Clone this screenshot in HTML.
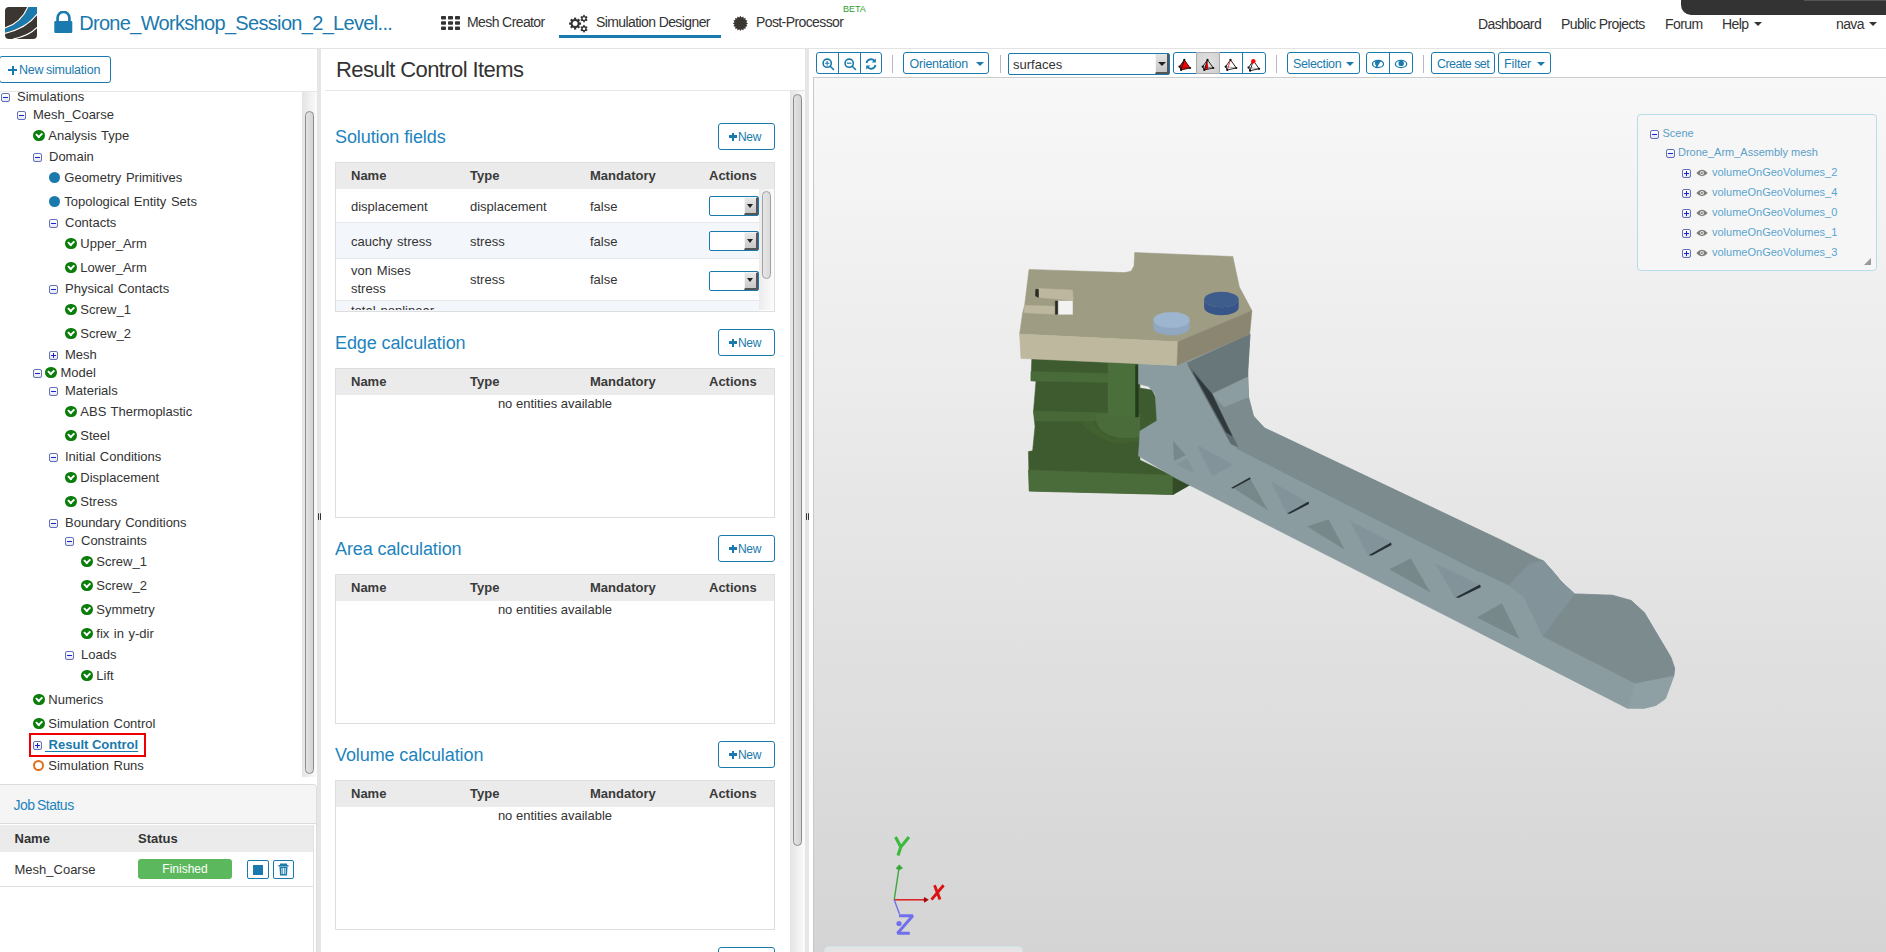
<!DOCTYPE html>
<html><head><meta charset="utf-8">
<style>
*{box-sizing:border-box;margin:0;padding:0}
html,body{width:1886px;height:952px;overflow:hidden;background:#fff;font-family:"Liberation Sans",sans-serif;color:#333}
.a{position:absolute}
.t{position:absolute;white-space:nowrap;line-height:1}
#nav{left:0;top:0;width:1886px;height:49px;border-bottom:1px solid #e3e3e3;background:#fff}
.nv{font-size:14px;color:#333;letter-spacing:-0.6px}
.split{background:#e6e6e6}
.sbtrack{background:linear-gradient(to right,#e4e4e4,#fbfbfb)}
.thumb{border:1px solid #8c8c8c;border-radius:5px;background:linear-gradient(to right,#e2e2e2,#d4d4d4)}
.tree{font-size:13px;color:#333;word-spacing:0.9px}
.chk{position:absolute;width:11.5px;height:11.5px;border-radius:50%;background:#0b7d0b}
.chk:after{content:"";position:absolute;left:3px;top:2.2px;width:4px;height:2.6px;border-left:2.1px solid #fff;border-bottom:2.1px solid #fff;transform:rotate(-45deg)}
.dot{position:absolute;width:11px;height:11px;border-radius:50%;background:#1a7aad}
.tg{position:absolute;width:9px;height:9px;border:1px solid #6470b8;border-radius:2px;background:linear-gradient(#fff,#e4e6f2)}
.tg:before{content:"";position:absolute;left:1px;top:3px;width:5px;height:1.3px;background:#1a22c8}
.tg.p:after{content:"";position:absolute;left:3px;top:1px;width:1.3px;height:5px;background:#1a22c8}
.btn{position:absolute;border:1px solid #1a7aad;border-radius:3px;background:#fff;color:#1a7aad}
.sect{font-size:18px;color:#1d84bd;letter-spacing:-0.1px}
.tbl{position:absolute;left:335px;width:440px;height:150px;border:1px solid #dedede;background:#fff}
.th{position:absolute;left:0;top:0;width:438px;height:25.5px;background:#ebebeb}
.thx{position:absolute;font-size:13px;font-weight:bold;color:#3a3a3a;white-space:nowrap;line-height:1}
.td{position:absolute;font-size:13px;color:#333;white-space:nowrap;line-height:1;word-spacing:1.3px}
</style></head><body>

<!-- NAVBAR -->
<div id="nav" class="a"></div>
<svg class="a" style="left:5px;top:7px" width="32" height="32" viewBox="0 0 32 32">
 <rect x="0" y="0" width="32" height="32" rx="4" fill="#3b3631"/>
 <path d="M23.5 0 L32 0 L32 6.5 Q22 20 0 25.5 L0 21.5 Q17 16 23.5 0 Z" fill="#1a7aad"/>
 <path d="M22.8 0 Q16.5 15.5 0 21" stroke="#fff" stroke-width="1.2" fill="none"/>
 <path d="M32 7.2 Q22 21 0 26.3" stroke="#fff" stroke-width="1.2" fill="none"/>
 <path d="M32 20.5 Q24 29 8 32" stroke="#fff" stroke-width="1.2" fill="none"/>
</svg>
<svg class="a" style="left:54px;top:11px" width="19" height="22" viewBox="0 0 19 22">
 <path d="M3.6 10 V6.8 A5.9 5.9 0 0 1 15.4 6.8 V10" stroke="#1a7aad" stroke-width="2.7" fill="none"/>
 <rect x="0.3" y="10" width="18" height="12" rx="1.3" fill="#1a7aad"/>
</svg>
<div class="t" style="left:79.2px;top:12.8px;font-size:20px;color:#1a7aad;letter-spacing:-0.68px">Drone_Workshop_Session_2_Level...</div>

<svg class="a" style="left:441px;top:16px" width="19" height="14" viewBox="0 0 19 14">
 <g fill="#333">
 <rect x="0" y="0" width="5" height="3.6" rx="0.8"/><rect x="7" y="0" width="5" height="3.6" rx="0.8"/><rect x="14" y="0" width="5" height="3.6" rx="0.8"/>
 <rect x="0" y="5.2" width="5" height="3.6" rx="0.8"/><rect x="7" y="5.2" width="5" height="3.6" rx="0.8"/><rect x="14" y="5.2" width="5" height="3.6" rx="0.8"/>
 <rect x="0" y="10.4" width="5" height="3.6" rx="0.8"/><rect x="7" y="10.4" width="5" height="3.6" rx="0.8"/><rect x="14" y="10.4" width="5" height="3.6" rx="0.8"/>
 </g>
</svg>
<div class="t nv" style="left:467px;top:15.3px">Mesh Creator</div>

<svg class="a" style="left:566px;top:14px" width="24" height="20" viewBox="0 0 24 20">
 <g fill="#333">
  <circle cx="9.1" cy="9.6" r="4.6"/>
  <g transform="translate(9.1 9.6)">
   <rect x="-1.1" y="-6" width="2.2" height="12"/>
   <rect x="-1.1" y="-6" width="2.2" height="12" transform="rotate(45)"/>
   <rect x="-1.1" y="-6" width="2.2" height="12" transform="rotate(90)"/>
   <rect x="-1.1" y="-6" width="2.2" height="12" transform="rotate(135)"/>
  </g>
  <circle cx="18" cy="4.6" r="2.7"/>
  <g transform="translate(18 4.6)">
   <rect x="-0.8" y="-3.7" width="1.6" height="7.4"/>
   <rect x="-0.8" y="-3.7" width="1.6" height="7.4" transform="rotate(60)"/>
   <rect x="-0.8" y="-3.7" width="1.6" height="7.4" transform="rotate(120)"/>
  </g>
  <circle cx="18" cy="14.7" r="2.7"/>
  <g transform="translate(18 14.7)">
   <rect x="-0.8" y="-3.7" width="1.6" height="7.4"/>
   <rect x="-0.8" y="-3.7" width="1.6" height="7.4" transform="rotate(60)"/>
   <rect x="-0.8" y="-3.7" width="1.6" height="7.4" transform="rotate(120)"/>
  </g>
 </g>
 <circle cx="9.1" cy="9.6" r="2.5" fill="#fff"/>
 <circle cx="18" cy="4.6" r="1.3" fill="#fff"/>
 <circle cx="18" cy="14.7" r="1.3" fill="#fff"/>
</svg>
<div class="t nv" style="left:596px;top:15.3px">Simulation Designer</div>
<div class="a" style="left:559px;top:35px;width:162px;height:3px;background:#1a7aad"></div>

<svg class="a" style="left:732px;top:15px" width="17" height="17" viewBox="-8.4 -8.4 17 17">
 <polygon fill="#3a3632" points="0.00,-7.60 1.17,-5.88 2.91,-7.02 3.33,-4.99 5.37,-5.37 4.99,-3.33 7.02,-2.91 5.88,-1.17 7.60,0.00 5.88,1.17 7.02,2.91 4.99,3.33 5.37,5.37 3.33,4.99 2.91,7.02 1.17,5.88 0.00,7.60 -1.17,5.88 -2.91,7.02 -3.33,4.99 -5.37,5.37 -4.99,3.33 -7.02,2.91 -5.88,1.17 -7.60,0.00 -5.88,-1.17 -7.02,-2.91 -4.99,-3.33 -5.37,-5.37 -3.33,-4.99 -2.91,-7.02 -1.17,-5.88"/>
</svg>
<div class="t nv" style="left:756px;top:15.3px">Post-Processor</div>
<div class="t" style="left:843px;top:5px;font-size:9px;color:#2ca02c">BETA</div>

<div class="a" style="left:1681px;top:0;width:205px;height:14.7px;background:#333;border-bottom-left-radius:10px"></div>
<div class="a" style="left:1804px;top:0;width:82px;height:1px;background:#555"></div>
<div class="t nv" style="left:1478px;top:16.5px">Dashboard</div>
<div class="t nv" style="left:1561px;top:16.5px">Public Projects</div>
<div class="t nv" style="left:1665px;top:16.5px">Forum</div>
<div class="t nv" style="left:1722px;top:16.5px">Help</div>
<div class="a" style="left:1754px;top:22px;width:0;height:0;border-left:4px solid transparent;border-right:4px solid transparent;border-top:4px solid #333"></div>
<div class="t nv" style="left:1836px;top:16.5px">nava</div>
<div class="a" style="left:1869px;top:22px;width:0;height:0;border-left:4px solid transparent;border-right:4px solid transparent;border-top:4px solid #333"></div>

<!-- LEFT PANEL -->
<div class="a" style="left:0;top:91px;width:317px;height:1px;background:#e6e6e6"></div>
<div class="a sbtrack" style="left:302px;top:92px;width:15px;height:685px"></div>
<div class="a thumb" style="left:305px;top:111px;width:9px;height:663px"></div>
<div class="tg" style="left:1px;top:93.2px"></div>
<div class="t tree" style="left:17px;top:89.8px">Simulations</div>
<div class="tg" style="left:17px;top:111.2px"></div>
<div class="t tree" style="left:33px;top:107.8px">Mesh_Coarse</div>
<div class="chk" style="left:33px;top:129.8px"></div>
<div class="t tree" style="left:48.3px;top:128.8px">Analysis Type</div>
<div class="tg" style="left:33px;top:153.2px"></div>
<div class="t tree" style="left:49px;top:149.8px">Domain</div>
<div class="dot" style="left:49px;top:172.0px"></div>
<div class="t tree" style="left:64.3px;top:170.8px">Geometry Primitives</div>
<div class="dot" style="left:49px;top:196.0px"></div>
<div class="t tree" style="left:64.3px;top:194.8px">Topological Entity Sets</div>
<div class="tg" style="left:49px;top:219.2px"></div>
<div class="t tree" style="left:65px;top:215.8px">Contacts</div>
<div class="chk" style="left:65px;top:237.8px"></div>
<div class="t tree" style="left:80.3px;top:236.8px">Upper_Arm</div>
<div class="chk" style="left:65px;top:261.8px"></div>
<div class="t tree" style="left:80.3px;top:260.8px">Lower_Arm</div>
<div class="tg" style="left:49px;top:285.2px"></div>
<div class="t tree" style="left:65px;top:281.8px">Physical Contacts</div>
<div class="chk" style="left:65px;top:303.8px"></div>
<div class="t tree" style="left:80.3px;top:302.8px">Screw_1</div>
<div class="chk" style="left:65px;top:327.8px"></div>
<div class="t tree" style="left:80.3px;top:326.8px">Screw_2</div>
<div class="tg p" style="left:49px;top:351.2px"></div>
<div class="t tree" style="left:65px;top:347.8px">Mesh</div>
<div class="tg" style="left:33px;top:369.2px"></div>
<div class="chk" style="left:45px;top:366.8px"></div>
<div class="t tree" style="left:60.5px;top:365.8px">Model</div>
<div class="tg" style="left:49px;top:387.2px"></div>
<div class="t tree" style="left:65px;top:383.8px">Materials</div>
<div class="chk" style="left:65px;top:405.8px"></div>
<div class="t tree" style="left:80.3px;top:404.8px">ABS Thermoplastic</div>
<div class="chk" style="left:65px;top:429.8px"></div>
<div class="t tree" style="left:80.3px;top:428.8px">Steel</div>
<div class="tg" style="left:49px;top:453.2px"></div>
<div class="t tree" style="left:65px;top:449.8px">Initial Conditions</div>
<div class="chk" style="left:65px;top:471.8px"></div>
<div class="t tree" style="left:80.3px;top:470.8px">Displacement</div>
<div class="chk" style="left:65px;top:495.8px"></div>
<div class="t tree" style="left:80.3px;top:494.8px">Stress</div>
<div class="tg" style="left:49px;top:519.2px"></div>
<div class="t tree" style="left:65px;top:515.8px">Boundary Conditions</div>
<div class="tg" style="left:65px;top:537.2px"></div>
<div class="t tree" style="left:81px;top:533.8px">Constraints</div>
<div class="chk" style="left:81px;top:555.8px"></div>
<div class="t tree" style="left:96.3px;top:554.8px">Screw_1</div>
<div class="chk" style="left:81px;top:579.8px"></div>
<div class="t tree" style="left:96.3px;top:578.8px">Screw_2</div>
<div class="chk" style="left:81px;top:603.8px"></div>
<div class="t tree" style="left:96.3px;top:602.8px">Symmetry</div>
<div class="chk" style="left:81px;top:627.8px"></div>
<div class="t tree" style="left:96.3px;top:626.8px">fix in y-dir</div>
<div class="tg" style="left:65px;top:651.2px"></div>
<div class="t tree" style="left:81px;top:647.8px">Loads</div>
<div class="chk" style="left:81px;top:669.8px"></div>
<div class="t tree" style="left:96.3px;top:668.8px">Lift</div>
<div class="chk" style="left:33px;top:693.8px"></div>
<div class="t tree" style="left:48.3px;top:692.8px">Numerics</div>
<div class="chk" style="left:33px;top:717.8px"></div>
<div class="t tree" style="left:48.3px;top:716.8px">Simulation Control</div>
<div class="tg p" style="left:33px;top:741.2px"></div>
<div class="t" style="left:45px;top:737.8px;font-size:13px;font-weight:bold;color:#1a7aad;text-decoration:underline;text-underline-offset:2px">&nbsp;Result Control</div>
<div class="a" style="left:29px;top:733px;width:117px;height:24px;border:2px solid #ee0000"></div>
<div class="a" style="left:33px;top:760.0px;width:11px;height:11px;border-radius:50%;border:2px solid #e0701e"></div>
<div class="t tree" style="left:48.3px;top:758.8px">Simulation Runs</div>

<div class="a" style="left:-1px;top:56px;width:112px;height:27px;border:1px solid #1a7aad;border-radius:3px;background:#fff"></div>
<div class="a" style="left:8.3px;top:69px;width:9px;height:2.4px;background:#1a7aad"></div>
<div class="a" style="left:11.6px;top:65.7px;width:2.4px;height:9px;background:#1a7aad"></div>
<div class="t" style="left:19px;top:63.5px;font-size:12.5px;color:#1a7aad;letter-spacing:-0.2px;word-spacing:-0.8px">New simulation</div>

<div class="a" style="left:0;top:784px;width:317px;height:168px;border-top:1px solid #dddddd;border-right:1px solid #dddddd;border-top-right-radius:4px;background:#fff"></div>
<div class="a" style="left:0;top:785px;width:316px;height:39px;background:#f5f5f5;border-top-right-radius:3px;border-bottom:1px solid #dddddd"></div>
<div class="t" style="left:13.5px;top:798px;font-size:14px;color:#1d84bd;letter-spacing:-0.5px;word-spacing:-1px">Job Status</div>
<div class="a" style="left:0;top:825px;width:314px;height:27px;background:#ebebeb"></div>
<div class="a" style="left:313px;top:825px;width:1px;height:127px;background:#e2e2e2"></div>
<div class="t" style="left:14.5px;top:832px;font-size:13px;font-weight:bold;color:#333">Name</div>
<div class="t" style="left:138px;top:832px;font-size:13px;font-weight:bold;color:#333">Status</div>
<div class="t" style="left:14.5px;top:863px;font-size:13px;color:#333">Mesh_Coarse</div>
<div class="a" style="left:0;top:886px;width:313px;height:1px;background:#e2e2e2"></div>
<div class="a" style="left:138px;top:859px;width:94px;height:20px;border-radius:3px;background:#5cb85c"></div>
<div class="t" style="left:138px;top:863px;width:94px;text-align:center;font-size:12px;color:#fff">Finished</div>
<div class="a" style="left:247px;top:860px;width:22px;height:19px;border:1px solid #1a7aad;border-radius:2px;background:#fff"></div>
<div class="a" style="left:253px;top:865px;width:10px;height:10px;background:#1a7aad"></div>
<div class="a" style="left:273px;top:860px;width:21px;height:19px;border:1px solid #1a7aad;border-radius:2px;background:#fff"></div>
<svg class="a" style="left:278px;top:863px" width="11" height="13" viewBox="0 0 11 13">
 <rect x="2" y="0.5" width="7" height="2" fill="#1a7aad"/>
 <rect x="0.5" y="2" width="10" height="1.6" fill="#1a7aad"/>
 <path d="M1.5 4 H9.5 L9 12.5 H2 Z" fill="#1a7aad"/>
 <rect x="3.5" y="5" width="0.9" height="6" fill="#fff"/><rect x="5.1" y="5" width="0.9" height="6" fill="#fff"/><rect x="6.7" y="5" width="0.9" height="6" fill="#fff"/>
</svg>


<!-- SPLITTERS -->
<div class="a split" style="left:317px;top:49px;width:4px;height:903px"></div>
<div class="a split" style="left:805px;top:49px;width:4px;height:903px"></div>
<div class="a" style="left:318px;top:513px;width:1px;height:7px;background:#333;border-radius:1px"></div>
<div class="a" style="left:320px;top:513px;width:1px;height:7px;background:#333;border-radius:1px"></div>
<div class="a" style="left:806px;top:513px;width:1px;height:7px;background:#333;border-radius:1px"></div>
<div class="a" style="left:808px;top:513px;width:1px;height:7px;background:#333;border-radius:1px"></div>

<!-- MIDDLE -->
<div class="t" style="left:336px;top:59.3px;font-size:22px;color:#333;letter-spacing:-0.6px">Result Control Items</div>
<div class="a" style="left:325px;top:90px;width:480px;height:1px;background:#e6e6e6"></div>
<div class="a sbtrack" style="left:790px;top:91px;width:15px;height:861px"></div>
<div class="a thumb" style="left:793px;top:94px;width:9px;height:752px"></div>
<div class="t sect" style="left:335px;top:128px">Solution fields</div>
<div class="btn" style="left:718px;top:123px;width:57px;height:27px"></div>
<div class="a" style="left:729px;top:135.3px;width:8px;height:2.4px;background:#1a7aad"></div>
<div class="a" style="left:731.8px;top:132.5px;width:2.4px;height:8px;background:#1a7aad"></div>
<div class="t" style="left:738px;top:131px;font-size:12px;color:#1a7aad;letter-spacing:-0.3px">New</div>
<div class="tbl" style="top:162px"></div>
<div class="th" style="left:336px;top:163px"></div>
<div class="thx" style="left:351px;top:168.7px">Name</div>
<div class="thx" style="left:470px;top:168.7px">Type</div>
<div class="thx" style="left:590px;top:168.7px">Mandatory</div>
<div class="thx" style="left:709px;top:168.7px">Actions</div>
<div class="t sect" style="left:335px;top:334px">Edge calculation</div>
<div class="btn" style="left:718px;top:329px;width:57px;height:27px"></div>
<div class="a" style="left:729px;top:341.3px;width:8px;height:2.4px;background:#1a7aad"></div>
<div class="a" style="left:731.8px;top:338.5px;width:2.4px;height:8px;background:#1a7aad"></div>
<div class="t" style="left:738px;top:337px;font-size:12px;color:#1a7aad;letter-spacing:-0.3px">New</div>
<div class="tbl" style="top:368px"></div>
<div class="th" style="left:336px;top:369px"></div>
<div class="thx" style="left:351px;top:374.7px">Name</div>
<div class="thx" style="left:470px;top:374.7px">Type</div>
<div class="thx" style="left:590px;top:374.7px">Mandatory</div>
<div class="thx" style="left:709px;top:374.7px">Actions</div>
<div class="t" style="left:336px;width:438px;text-align:center;top:397px;font-size:13px;color:#333;">no entities available</div>
<div class="t sect" style="left:335px;top:540px">Area calculation</div>
<div class="btn" style="left:718px;top:535px;width:57px;height:27px"></div>
<div class="a" style="left:729px;top:547.3px;width:8px;height:2.4px;background:#1a7aad"></div>
<div class="a" style="left:731.8px;top:544.5px;width:2.4px;height:8px;background:#1a7aad"></div>
<div class="t" style="left:738px;top:543px;font-size:12px;color:#1a7aad;letter-spacing:-0.3px">New</div>
<div class="tbl" style="top:574px"></div>
<div class="th" style="left:336px;top:575px"></div>
<div class="thx" style="left:351px;top:580.7px">Name</div>
<div class="thx" style="left:470px;top:580.7px">Type</div>
<div class="thx" style="left:590px;top:580.7px">Mandatory</div>
<div class="thx" style="left:709px;top:580.7px">Actions</div>
<div class="t" style="left:336px;width:438px;text-align:center;top:603px;font-size:13px;color:#333;">no entities available</div>
<div class="t sect" style="left:335px;top:746px">Volume calculation</div>
<div class="btn" style="left:718px;top:741px;width:57px;height:27px"></div>
<div class="a" style="left:729px;top:753.3px;width:8px;height:2.4px;background:#1a7aad"></div>
<div class="a" style="left:731.8px;top:750.5px;width:2.4px;height:8px;background:#1a7aad"></div>
<div class="t" style="left:738px;top:749px;font-size:12px;color:#1a7aad;letter-spacing:-0.3px">New</div>
<div class="tbl" style="top:780px"></div>
<div class="th" style="left:336px;top:781px"></div>
<div class="thx" style="left:351px;top:786.7px">Name</div>
<div class="thx" style="left:470px;top:786.7px">Type</div>
<div class="thx" style="left:590px;top:786.7px">Mandatory</div>
<div class="thx" style="left:709px;top:786.7px">Actions</div>
<div class="t" style="left:336px;width:438px;text-align:center;top:809px;font-size:13px;color:#333;">no entities available</div>
<div class="btn" style="left:718px;top:947px;width:57px;height:27px"></div>
<div class="a" style="left:729px;top:959.3px;width:8px;height:2.4px;background:#1a7aad"></div>
<div class="a" style="left:731.8px;top:956.5px;width:2.4px;height:8px;background:#1a7aad"></div>
<div class="t" style="left:738px;top:955px;font-size:12px;color:#1a7aad;letter-spacing:-0.3px">New</div>
<div class="a" style="left:336px;top:223px;width:423px;height:35px;background:#f3f6fa"></div>
<div class="a" style="left:336px;top:300px;width:423px;height:11px;background:#f3f6fa"></div>
<div class="a" style="left:336px;top:222px;width:423px;height:1px;background:#e6e8ec"></div>
<div class="a" style="left:336px;top:258px;width:423px;height:1px;background:#e6e8ec"></div>
<div class="a" style="left:336px;top:300px;width:423px;height:1px;background:#e6e8ec"></div>
<div class="a" style="left:759px;top:189px;width:15px;height:121px;background:linear-gradient(to right,#ececec,#fcfcfc)"></div>
<div class="a" style="left:762px;top:191px;width:9px;height:88px;border:1px solid #a0a0a0;border-radius:5px;background:linear-gradient(to right,#e6e6e6,#dadada)"></div>
<div class="td" style="left:351px;top:199.5px">displacement</div>
<div class="td" style="left:470px;top:199.5px">displacement</div>
<div class="td" style="left:590px;top:199.5px">false</div>
<div class="td" style="left:351px;top:235px">cauchy stress</div>
<div class="td" style="left:470px;top:235px">stress</div>
<div class="td" style="left:590px;top:235px">false</div>
<div class="td" style="left:351px;top:264px">von Mises</div>
<div class="td" style="left:351px;top:282px">stress</div>
<div class="td" style="left:470px;top:273px">stress</div>
<div class="td" style="left:590px;top:273px">false</div>
<div class="a" style="left:336px;top:301px;width:423px;height:9px;overflow:hidden"><div class="td" style="left:15px;top:3px">total nonlinear</div></div>
<div class="a" style="left:709px;top:196px;width:50px;height:20px;border:1px solid #1a7aad;border-radius:2px;background:#fff"></div>
<div class="a" style="left:743.5px;top:197px;width:14.5px;height:18px;background:linear-gradient(#e8e8e8,#c8c8c8);border-right:2px solid #555;border-bottom:2px solid #555;border-left:1px solid #f4f4f4;border-top:1px solid #f4f4f4"></div>
<div class="a" style="left:747px;top:203.5px;width:0;height:0;border-left:3.5px solid transparent;border-right:3.5px solid transparent;border-top:4px solid #222"></div>
<div class="a" style="left:709px;top:231px;width:50px;height:20px;border:1px solid #1a7aad;border-radius:2px;background:#fff"></div>
<div class="a" style="left:743.5px;top:232px;width:14.5px;height:18px;background:linear-gradient(#e8e8e8,#c8c8c8);border-right:2px solid #555;border-bottom:2px solid #555;border-left:1px solid #f4f4f4;border-top:1px solid #f4f4f4"></div>
<div class="a" style="left:747px;top:238.5px;width:0;height:0;border-left:3.5px solid transparent;border-right:3.5px solid transparent;border-top:4px solid #222"></div>
<div class="a" style="left:709px;top:270.5px;width:50px;height:20px;border:1px solid #1a7aad;border-radius:2px;background:#fff"></div>
<div class="a" style="left:743.5px;top:271.5px;width:14.5px;height:18px;background:linear-gradient(#e8e8e8,#c8c8c8);border-right:2px solid #555;border-bottom:2px solid #555;border-left:1px solid #f4f4f4;border-top:1px solid #f4f4f4"></div>
<div class="a" style="left:747px;top:278.0px;width:0;height:0;border-left:3.5px solid transparent;border-right:3.5px solid transparent;border-top:4px solid #222"></div>


<!-- RIGHT -->
<div class="a" style="left:813px;top:77px;width:1073px;height:875px;border-top:1px solid #cccccc;border-left:1px solid #c8c8c8;background:linear-gradient(#f8f8f8,#d4d4d4)"></div>
<div class="btn" style="left:816px;top:52px;width:66px;height:22px"></div>
<div class="a" style="left:838px;top:53px;width:1px;height:20px;background:#1a7aad"></div>
<div class="a" style="left:860px;top:53px;width:1px;height:20px;background:#1a7aad"></div>
<svg class="a" style="left:822px;top:58px" width="13" height="13" viewBox="0 0 13 13">
 <circle cx="5.2" cy="5.2" r="4.1" stroke="#1a7aad" stroke-width="1.6" fill="none"/>
 <path d="M8.2 8.2 L11.5 11.5" stroke="#1a7aad" stroke-width="1.6" stroke-linecap="round"/>
 <path d="M3 5.2 H7.4 M5.2 3 V7.4" stroke="#1a7aad" stroke-width="1.1"/>
</svg>
<svg class="a" style="left:844px;top:58px" width="13" height="13" viewBox="0 0 13 13">
 <circle cx="5.2" cy="5.2" r="4.1" stroke="#1a7aad" stroke-width="1.6" fill="none"/>
 <path d="M8.2 8.2 L11.5 11.5" stroke="#1a7aad" stroke-width="1.6" stroke-linecap="round"/>
 <path d="M3 5.2 H7.4" stroke="#1a7aad" stroke-width="1.2"/>
</svg>
<svg class="a" style="left:865px;top:58.3px" width="12" height="12" viewBox="0 0 12 12">
 <path d="M1.5 5 A4.6 4.6 0 0 1 9.6 3" stroke="#1a7aad" stroke-width="1.8" fill="none"/>
 <path d="M10.8 0.5 V4.6 H6.7 Z" fill="#1a7aad"/>
 <path d="M10.5 7 A4.6 4.6 0 0 1 2.4 9" stroke="#1a7aad" stroke-width="1.8" fill="none"/>
 <path d="M1.2 11.5 V7.4 H5.3 Z" fill="#1a7aad"/>
</svg>
<div class="a" style="left:892px;top:55px;width:1px;height:18px;background:#b8b8c8"></div>

<div class="btn" style="left:903px;top:52px;width:86px;height:22px"></div>
<div class="t" style="left:909.5px;top:58px;font-size:12.5px;color:#1a7aad;letter-spacing:-0.25px">Orientation</div>
<div class="a" style="left:976px;top:62px;width:0;height:0;border-left:4px solid transparent;border-right:4px solid transparent;border-top:4px solid #1a7aad"></div>
<div class="a" style="left:1000px;top:55px;width:1px;height:18px;background:#b8b8c8"></div>

<div class="a" style="left:1008px;top:53px;width:162px;height:22px;border:1px solid #1a7aad;border-radius:2px;background:#fff"></div>
<div class="t" style="left:1013px;top:58px;font-size:13px;color:#333">surfaces</div>
<div class="a" style="left:1155px;top:54px;width:14px;height:20px;background:linear-gradient(#e4e4e4,#c6c6c6);border-right:2px solid #555;border-bottom:2px solid #555;border-left:1px solid #f2f2f2"></div>
<div class="a" style="left:1157.5px;top:61.5px;width:0;height:0;border-left:4px solid transparent;border-right:4px solid transparent;border-top:4px solid #222"></div>

<div class="btn" style="left:1173px;top:52px;width:93px;height:22px"></div>
<div class="a" style="left:1196px;top:52px;width:24px;height:22px;border:1px solid #aaaaaa;background:radial-gradient(ellipse at 50% 40%,#e2e2e2,#cfcfcf)"></div>
<div class="a" style="left:1242px;top:53px;width:1px;height:20px;background:#1a7aad"></div>
<svg class="a" style="left:0;top:0" width="1886" height="80" viewBox="0 0 1886 80">
<polygon points="1184.3,59.8 1179.5,66.7 1181.1,69.9 1190.1,68.0" fill="#ff0000"/>
<path d="M1184.3,59.8 L1179.5,66.7" stroke="#111" stroke-width="0.9"/>
<path d="M1184.3,59.8 L1181.1,69.9" stroke="#111" stroke-width="0.9"/>
<path d="M1184.3,59.8 L1190.1,68.0" stroke="#111" stroke-width="0.9"/>
<path d="M1179.5,66.7 L1181.1,69.9" stroke="#111" stroke-width="0.9"/>
<path d="M1181.1,69.9 L1190.1,68.0" stroke="#111" stroke-width="0.9"/>
<path d="M1179.5,66.7 L1190.1,68.0" stroke="#111" stroke-width="0.6" opacity="0.6"/>
<circle cx="1179.5" cy="66.7" r="1.1" fill="#111"/>
<circle cx="1181.1" cy="69.9" r="1.1" fill="#111"/>
<circle cx="1190.1" cy="68.0" r="1.1" fill="#111"/>
<circle cx="1184.3" cy="59.8" r="1.1" fill="#111"/>
<polygon points="1207.5,59.8 1204.3,69.9 1208.3,69.0" fill="#ff0000"/>
<path d="M1207.5,59.8 L1202.7,66.7" stroke="#111" stroke-width="0.9"/>
<path d="M1207.5,59.8 L1204.3,69.9" stroke="#111" stroke-width="0.9"/>
<path d="M1207.5,59.8 L1213.3,68.0" stroke="#111" stroke-width="0.9"/>
<path d="M1202.7,66.7 L1204.3,69.9" stroke="#111" stroke-width="0.9"/>
<path d="M1204.3,69.9 L1213.3,68.0" stroke="#111" stroke-width="0.9"/>
<path d="M1202.7,66.7 L1213.3,68.0" stroke="#111" stroke-width="0.6" opacity="0.6"/>
<circle cx="1202.7" cy="66.7" r="1.1" fill="#111"/>
<circle cx="1204.3" cy="69.9" r="1.1" fill="#111"/>
<circle cx="1213.3" cy="68.0" r="1.1" fill="#111"/>
<circle cx="1207.5" cy="59.8" r="1.1" fill="#111"/>
<path d="M1230.5,59.8 L1225.7,66.7" stroke="#111" stroke-width="0.9"/>
<path d="M1230.5,59.8 L1227.3,69.9" stroke="#ff2020" stroke-width="0.9"/>
<path d="M1230.5,59.8 L1236.3,68.0" stroke="#111" stroke-width="0.9"/>
<path d="M1225.7,66.7 L1227.3,69.9" stroke="#111" stroke-width="0.9"/>
<path d="M1227.3,69.9 L1236.3,68.0" stroke="#111" stroke-width="0.9"/>
<path d="M1225.7,66.7 L1236.3,68.0" stroke="#111" stroke-width="0.6" opacity="0.6"/>
<circle cx="1225.7" cy="66.7" r="1.1" fill="#111"/>
<circle cx="1227.3" cy="69.9" r="1.1" fill="#111"/>
<circle cx="1236.3" cy="68.0" r="1.1" fill="#111"/>
<circle cx="1230.5" cy="59.8" r="1.1" fill="#111"/>
<path d="M1253.3,60.6 L1248.5,67.5" stroke="#111" stroke-width="0.9"/>
<path d="M1253.3,60.6 L1250.1,70.7" stroke="#111" stroke-width="0.9"/>
<path d="M1253.3,60.6 L1259.1,68.8" stroke="#111" stroke-width="0.9"/>
<path d="M1248.5,67.5 L1250.1,70.7" stroke="#111" stroke-width="0.9"/>
<path d="M1250.1,70.7 L1259.1,68.8" stroke="#111" stroke-width="0.9"/>
<path d="M1248.5,67.5 L1259.1,68.8" stroke="#111" stroke-width="0.6" opacity="0.6"/>
<circle cx="1248.5" cy="67.5" r="1.1" fill="#111"/>
<circle cx="1250.1" cy="70.7" r="1.1" fill="#111"/>
<circle cx="1259.1" cy="68.8" r="1.1" fill="#111"/>
<circle cx="1253.3" cy="61.2" r="2.2" fill="#ff0000"/>
</svg>
<div class="a" style="left:1276px;top:55px;width:1px;height:18px;background:#b8b8c8"></div>

<div class="btn" style="left:1287px;top:52px;width:73px;height:22px"></div>
<div class="t" style="left:1293px;top:58px;font-size:12.5px;color:#1a7aad;letter-spacing:-0.35px">Selection</div>
<div class="a" style="left:1346px;top:62px;width:0;height:0;border-left:4px solid transparent;border-right:4px solid transparent;border-top:4px solid #1a7aad"></div>

<div class="btn" style="left:1366px;top:52px;width:47px;height:22px"></div>
<div class="a" style="left:1389px;top:53px;width:1px;height:20px;background:#1a7aad"></div>
<svg class="a" style="left:1360px;top:50px" width="60" height="26" viewBox="1360 50 60 26">
 <ellipse cx="1378" cy="64" rx="5.5" ry="3.5" stroke="#1a7aad" stroke-width="1.3" fill="none"/>
 <path d="M1375 61.6 Q1377 60.6 1379.3 60.8 L1376.3 66.2 Q1374.6 64.5 1375 61.6 Z" fill="#1a7aad"/>
 <polygon points="1379.6,59.8 1381.3,60.3 1376.3,68.6 1375,67.8" fill="#1a7aad"/>
 <ellipse cx="1401" cy="64" rx="5.7" ry="3.6" stroke="#1a7aad" stroke-width="1.3" fill="none"/>
 <circle cx="1401.2" cy="63.4" r="2.7" fill="#1a7aad"/>
</svg>
<div class="a" style="left:1423px;top:55px;width:1px;height:18px;background:#b8b8c8"></div>

<div class="btn" style="left:1431px;top:52px;width:64px;height:22px"></div>
<div class="t" style="left:1437px;top:58px;font-size:12.5px;color:#1a7aad;letter-spacing:-0.55px">Create set</div>
<div class="btn" style="left:1498px;top:52px;width:53px;height:22px"></div>
<div class="t" style="left:1504px;top:58px;font-size:12.5px;color:#1a7aad;letter-spacing:-0.1px">Filter</div>
<div class="a" style="left:1537px;top:62px;width:0;height:0;border-left:4px solid transparent;border-right:4px solid transparent;border-top:4px solid #1a7aad"></div>
<svg class="a" style="left:0;top:0" width="1886" height="952" viewBox="0 0 1886 952">
<!-- GREEN PART -->
<polygon fill="#3d5b2f" points="1031.8,358 1140,362 1140,388 1152,390 1157,400 1157,425 1140,433 1140,460 1190.6,484.4 1173,494.5 1029.3,491.1 1028.4,451.6 1032.6,450.8 1035,426.4 1033.5,411.3 1036,381 1031,380.2" stroke="#3d5b2f" stroke-width="0.5" stroke-linejoin="round"/>
<polygon fill="#496a39" points="1031,371.5 1109,373.5 1109,382.5 1031,381" stroke="#496a39" stroke-width="0.5" stroke-linejoin="round"/>
<polygon fill="#486838" points="1033.5,411 1110,413 1125,421 1035,421" stroke="#486838" stroke-width="0.5" stroke-linejoin="round"/>
<path fill="#4a6b3a" d="M1096 414 Q1094 428 1108 435 Q1124 441 1140 437 L1140 414 Z"/><path fill="#41612f" d="M1080 421 Q1095 440 1120 444 L1140 441 L1140 437 Q1120 441 1106 435 Q1096 429 1094 421 Z"/>
<polygon fill="#4b6f3b" points="1108,363 1138.5,364.3 1138.5,417 1108,416" stroke="#4b6f3b" stroke-width="0.5" stroke-linejoin="round"/>
<polygon fill="#243a1c" points="1135.5,365 1138.5,365 1138.5,417 1135.5,417" stroke="#243a1c" stroke-width="0.5" stroke-linejoin="round"/>
<polygon fill="#4a6b3a" points="1028.4,470.1 1173,475.2 1173,494.5 1029.3,491.1" stroke="#4a6b3a" stroke-width="0.5" stroke-linejoin="round"/>
<polygon fill="#334c27" points="1173,475.2 1190.6,484.4 1173,494.5" stroke="#334c27" stroke-width="0.5" stroke-linejoin="round"/>
<!-- ARM -->
<polygon fill="#8a9ca0" points="1138.4,363.7 1177,365.4 1250,334 1247.6,370 1248.5,397 1253.5,416 1264.5,428 1290,440 1500.8,540 1538.6,558.9 1543.3,560.8 1551.8,570.2 1561.3,581.6 1574.5,593.9 1612.3,595.2 1631.2,600.5 1644.5,612.8 1670.9,657.2 1674.7,668.5 1673.8,676.1 1665.3,698.8 1655.8,705.4 1644.5,708.2 1627.5,708.2 1175.4,478 1138.4,456.1 1140,431 1156.9,420.8 1155.2,394 1148.5,386.4 1138.4,383.9" stroke="#8a9ca0" stroke-width="0.5" stroke-linejoin="round"/>
<polygon fill="#7b8b8e" points="1188,364 1250,334 1247.6,370 1248.5,397 1253.5,416 1264.5,428 1290,440 1500.8,540 1538.6,558.9 1543.3,560.8 1551.8,570.2 1561.3,581.6 1574.5,593.9 1612.3,595.2 1631.2,600.5 1644.5,612.8 1670.9,657.2 1674.7,668.5 1673.8,676.1 1635,683.7 1542.4,636.4 1523.5,596.7 1508.4,585.4 1480,572 1237.6,449" stroke="#7b8b8e" stroke-width="0.5" stroke-linejoin="round"/>
<polygon fill="#82949a" points="1508.4,585.4 1530,563.6 1543.3,560.8 1551.8,570.2 1561.3,581.6 1574.5,593.9 1542.4,636.4 1523.5,596.7" stroke="#82949a" stroke-width="0.5" stroke-linejoin="round"/>
<polygon fill="#8a9ca0" points="1480,572 1508.4,585.4 1523.5,596.7 1542.4,636.4 1635,683.7 1627.5,708.2 1480,632.6" stroke="#8a9ca0" stroke-width="0.5" stroke-linejoin="round"/>
<polygon fill="#8ea0a4" points="1627.5,708.2 1635,683.7 1673.8,676.1 1665.3,698.8 1655.8,705.4 1644.5,708.2" stroke="#8ea0a4" stroke-width="0.5" stroke-linejoin="round"/>
<polygon fill="#687779" points="1187,363 1250,334 1247.6,377 1212,394 1195,372" stroke="#687779" stroke-width="0.5" stroke-linejoin="round"/>
<polygon fill="#8c9da1" points="1212,394 1247.6,377 1248.5,397 1224,407" stroke="#8c9da1" stroke-width="0.5" stroke-linejoin="round"/>
<polygon fill="#5f6d70" points="1188,365 1195,372 1212,394 1238,447 1231,444" stroke="#5f6d70" stroke-width="0.5" stroke-linejoin="round"/>
<polygon fill="#2f393c" points="1193,372 1212,394 1232,436 1226,432" stroke="#2f393c" stroke-width="0.5" stroke-linejoin="round"/>
<!-- triangle holes -->
<g fill="#77888b">
<polygon points="1173,440.7 1185.7,455 1174,461"/>
<polygon points="1177,464.5 1187,458.7 1194.7,473" fill="#82949a" stroke="#82949a" stroke-width="0.5" stroke-linejoin="round"/>
<polygon points="1197.2,445.2 1232.5,464.5 1212.4,476.3" fill="#82949a" stroke="#82949a" stroke-width="0.5" stroke-linejoin="round"/>
<polygon points="1232.1,487.1 1250,478.2 1267.9,510.4"/>
<polygon points="1271.4,481.8 1308.9,503.2 1287.5,513.9" fill="#82949a" stroke="#82949a" stroke-width="0.5" stroke-linejoin="round"/>
<polygon points="1307.1,526.4 1328.6,519.3 1344.6,549.6"/>
<polygon points="1350,521 1391,542.5 1367.9,555" fill="#82949a" stroke="#82949a" stroke-width="0.5" stroke-linejoin="round"/>
<polygon points="1389.3,569.3 1410.7,558.6 1430.4,592.5"/>
<polygon points="1435.7,563.9 1480.4,585.4 1455.4,597.9" fill="#82949a" stroke="#82949a" stroke-width="0.5" stroke-linejoin="round"/>
<polygon points="1476.8,617.5 1501.8,603.2 1519.6,638.9"/>
</g>
<g fill="#263033">
<polygon points="1231,488 1250,477.2 1250.6,479 1233,488.6"/>
<polygon points="1287,513.6 1308.5,501.6 1309,504 1290,513.8"/>
<polygon points="1455.5,597.6 1480,584.6 1480.8,587.2 1459,597.8"/>
<polygon points="1368.5,555.2 1391,542.6 1391.6,545 1372,555.4"/>
</g>
<!-- PLATE -->
<polygon fill="#9f9c84" points="1029,269.4 1124.7,272.6 1131,271.2 1134,266 1134.7,252.5 1232.8,256.5 1239.4,287.1 1251.9,310.6 1177.9,341.8 1019.6,334.1 1022.5,313.5 1024.7,304.7" stroke="#9f9c84" stroke-width="0.5" stroke-linejoin="round"/>
<polygon fill="#bdb89e" points="1019.6,334.1 1177.9,341.8 1177,365.4 1020.9,358.4" stroke="#bdb89e" stroke-width="0.5" stroke-linejoin="round"/>
<polygon fill="#8a8672" points="1177.9,341.8 1251.9,310.6 1249.7,334.3 1177,365.4" stroke="#8a8672" stroke-width="0.5" stroke-linejoin="round"/>
<polygon fill="#bcb79e" points="1037.9,288.5 1072.5,290 1073.2,300.3 1037.9,297.4" stroke="#bcb79e" stroke-width="0.5" stroke-linejoin="round"/>
<polygon fill="#bcb79e" points="1024.7,305.4 1055.6,306.2 1056.3,314.3 1024,312.8" stroke="#bcb79e" stroke-width="0.5" stroke-linejoin="round"/>
<polygon fill="#f2f2f2" points="1057,301 1072.5,301 1072.5,314.3 1057,314.3" stroke="#f2f2f2" stroke-width="0.5" stroke-linejoin="round"/>
<polygon fill="#2a2a22" points="1035.7,289.3 1038.5,289.3 1038.5,297.4 1035.5,296" stroke="#2a2a22" stroke-width="0.5" stroke-linejoin="round"/>
<polygon fill="#2a2a22" points="1055.3,301 1057.8,301 1057.8,314.3 1055.3,314.3" stroke="#2a2a22" stroke-width="0.5" stroke-linejoin="round"/>
<!-- screws -->
<path fill="#8fa7c1" d="M1153.4 320 A18.2 8 0 0 0 1189.7 320 V328 A18.2 8 0 0 1 1153.4 328 Z"/>
<ellipse cx="1171.5" cy="320" rx="18.2" ry="8" fill="#9db5cf"/>
<path fill="#38558a" d="M1204.1 299.5 A17.3 7.7 0 0 0 1238.7 299.5 V307.5 A17.3 7.7 0 0 1 1204.1 307.5 Z"/>
<ellipse cx="1221.4" cy="299.5" rx="17.3" ry="7.7" fill="#3e5c8c"/>
</svg>
<div class="a" style="left:1637px;top:114px;width:240px;height:157px;border:1px solid #b4dcea;border-radius:4px;background:rgba(246,246,246,0.9)"></div>
<div class="tg" style="left:1650px;top:129.5px"></div>
<div class="t" style="left:1662.5px;top:128px;font-size:11px;color:#5a9fc8">Scene</div>
<div class="tg" style="left:1666px;top:148.5px"></div>
<div class="t" style="left:1678px;top:147px;font-size:11px;color:#5a9fc8">Drone_Arm_Assembly mesh</div>
<div class="tg p" style="left:1682px;top:169.0px"></div>
<svg class="a" style="left:1696px;top:168.6px" width="12" height="8" viewBox="0 0 12 8"><path d="M0.3 4 Q6 -2.5 11.7 4 Q6 10.5 0.3 4 Z" fill="#7e7e78"/><circle cx="6" cy="4" r="1.9" fill="#f2f2f2"/><circle cx="6" cy="4" r="1" fill="#7e7e78"/></svg>
<div class="t" style="left:1712px;top:166.8px;font-size:11px;color:#5aa5cf">volumeOnGeoVolumes_2</div>
<div class="tg p" style="left:1682px;top:189.0px"></div>
<svg class="a" style="left:1696px;top:188.6px" width="12" height="8" viewBox="0 0 12 8"><path d="M0.3 4 Q6 -2.5 11.7 4 Q6 10.5 0.3 4 Z" fill="#7e7e78"/><circle cx="6" cy="4" r="1.9" fill="#f2f2f2"/><circle cx="6" cy="4" r="1" fill="#7e7e78"/></svg>
<div class="t" style="left:1712px;top:186.8px;font-size:11px;color:#5aa5cf">volumeOnGeoVolumes_4</div>
<div class="tg p" style="left:1682px;top:209.0px"></div>
<svg class="a" style="left:1696px;top:208.6px" width="12" height="8" viewBox="0 0 12 8"><path d="M0.3 4 Q6 -2.5 11.7 4 Q6 10.5 0.3 4 Z" fill="#7e7e78"/><circle cx="6" cy="4" r="1.9" fill="#f2f2f2"/><circle cx="6" cy="4" r="1" fill="#7e7e78"/></svg>
<div class="t" style="left:1712px;top:206.8px;font-size:11px;color:#5aa5cf">volumeOnGeoVolumes_0</div>
<div class="tg p" style="left:1682px;top:229.0px"></div>
<svg class="a" style="left:1696px;top:228.6px" width="12" height="8" viewBox="0 0 12 8"><path d="M0.3 4 Q6 -2.5 11.7 4 Q6 10.5 0.3 4 Z" fill="#7e7e78"/><circle cx="6" cy="4" r="1.9" fill="#f2f2f2"/><circle cx="6" cy="4" r="1" fill="#7e7e78"/></svg>
<div class="t" style="left:1712px;top:226.8px;font-size:11px;color:#5aa5cf">volumeOnGeoVolumes_1</div>
<div class="tg p" style="left:1682px;top:249.0px"></div>
<svg class="a" style="left:1696px;top:248.6px" width="12" height="8" viewBox="0 0 12 8"><path d="M0.3 4 Q6 -2.5 11.7 4 Q6 10.5 0.3 4 Z" fill="#7e7e78"/><circle cx="6" cy="4" r="1.9" fill="#f2f2f2"/><circle cx="6" cy="4" r="1" fill="#7e7e78"/></svg>
<div class="t" style="left:1712px;top:246.8px;font-size:11px;color:#5aa5cf">volumeOnGeoVolumes_3</div>
<svg class="a" style="left:1864px;top:258px" width="7" height="7" viewBox="0 0 7 7"><path d="M7 0 L7 7 L0 7 Z" fill="#9a9a9a"/></svg>
<svg class="a" style="left:880px;top:830px" width="70" height="110" viewBox="880 830 70 110">
 <path d="M894.2 899.8 L899 868" stroke="#3aa83a" stroke-width="1.4"/>
 <polygon points="895.6,868.6 899.3,864.6 903,868.3 899.2,870.2" fill="#3aa83a"/>
 <path d="M895.5 837 L900.8 847 M909 837 L900.8 847 L898 855.6" stroke="#3dba3d" stroke-width="3.1" fill="none" stroke-linejoin="bevel"/>
 <path d="M894.2 899.8 L925 899.8" stroke="#dd1111" stroke-width="1.4"/>
 <polygon points="924.3,897 928.8,899.8 924.3,902.8 923.5,899.8" fill="#aa0a0a"/>
 <path d="M934.5 885.2 L940 899.6 M943.6 885.2 L931.5 899.6" stroke="#dd1111" stroke-width="2.9" fill="none"/>
 <path d="M894.2 899.8 L899.5 914" stroke="#7070ee" stroke-width="1.4"/>
 <path d="M899 915.8 H912.8 L897.5 933.3 H909.8" stroke="#7070ee" stroke-width="3" fill="none" stroke-linejoin="bevel"/>
 <circle cx="899" cy="923.5" r="2.6" fill="#7070ee"/>
</svg>
<div class="a" style="left:824px;top:946px;width:199px;height:10px;border:1px solid #cfe3ea;border-radius:4px;background:#e4e4e4"></div>


</body></html>
